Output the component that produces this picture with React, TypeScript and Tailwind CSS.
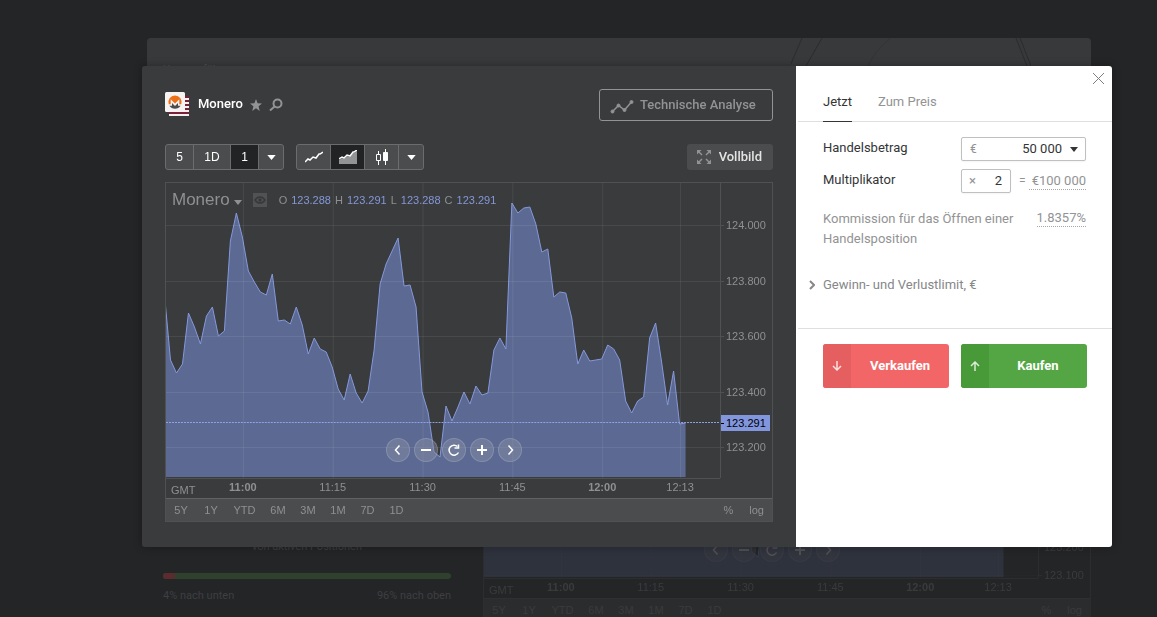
import { useState } from "react";
import type { ReactNode } from "react";

// one price sample per minute, in plot units
const SAMPLES = [
    112, 177, 190, 181, 130, 144, 161, 133, 124, 153, 148, 58, 30, 54, 88, 99, 109, 112, 91, 138,
    137, 141, 124, 142, 171, 155, 166, 169, 184, 206, 217, 191, 210, 220, 208, 167, 101, 81, 68, 55,
    103, 102, 124, 209, 229, 269, 274, 223, 238, 224, 209, 221, 203, 212, 210, 167, 155, 166, 20, 30,
    25, 24, 41, 69, 66, 114, 109, 110, 135, 181, 167, 178, 177, 176, 162, 166, 177, 218, 230, 218,
    214, 155, 140, 179, 222, 188, 241, 240,
];

const TIMES = [
    { label: "11:00", x: 77, strong: true },
    { label: "11:15", x: 167 },
    { label: "11:30", x: 257 },
    { label: "11:45", x: 347 },
    { label: "12:00", x: 437, strong: true },
    { label: "12:13", x: 515 },
];

const PRICES = [
    { label: "124.000", y: 42 },
    { label: "123.800", y: 98 },
    { label: "123.600", y: 153 },
    { label: "123.400", y: 209 },
    { label: "123.200", y: 264 },
];

const LOWER_PRICES = [
    { label: "123.400", y: 209 },
    { label: "123.200", y: 264 },
    { label: "123.100", y: 292 },
];

const OHLC = [
    ["O", "123.288"],
    ["H", "123.291"],
    ["L", "123.288"],
    ["C", "123.291"],
];

const RANGES = [
    { label: "5Y", width: "w-[30px]" },
    { label: "1Y", width: "w-[30px]" },
    { label: "YTD", width: "w-[37px]" },
    { label: "6M", width: "w-[30px]" },
    { label: "3M", width: "w-[30px]" },
    { label: "1M", width: "w-[30px]" },
    { label: "7D", width: "w-[29px]" },
    { label: "1D", width: "w-[29px]" },
];

const PLOT_W = 555;
const PLOT_H = 295;

const line = SAMPLES.map((y, i) => `${i * 6 - 1.5},${y}`).join(" ");
const area = `-1.5,294 ${line} 520.5,294`;

const Caret = ({ className = "" }: { className?: string }) => (
    <svg viewBox="0 0 10 6" className={className} fill="currentColor" aria-hidden="true">
        <path d="M0 0h10L5 6z" />
    </svg>
);

const MoneroLogo = () => (
    <svg viewBox="0 0 24 24" className="size-6" aria-hidden="true">
        <path fill="#f4eef0" d="M4 4h20v20H4z" />
        <path stroke="#7a2038" strokeWidth="2" d="M20 5h4M20 9h4M20 13h4M20 17h4M4 21h20" />
        <rect width="20" height="20" rx="1.5" fill="#f7f3f2" />
        <path fill="#ee6f16" d="M10 3.5a6.6 6.6 0 0 0-6.3 8.7h2V7.3l4.3 4.3 4.3-4.3v4.9h2A6.6 6.6 0 0 0 10 3.5z" />
        <path fill="#4c4c4c" d="M8.7 12.8 7 11v2.7H4.4a6.6 6.6 0 0 0 11.2 0H13V11l-1.7 1.8L10 14.1z" />
    </svg>
);

const RoundButton = ({ label, children }: { label: string; children: ReactNode }) => (
    <button
        type="button"
        aria-label={label}
        className="size-6 rounded-full border border-white/15 bg-[#8a8da3]/45 flex items-center justify-center text-white"
    >
        <svg viewBox="0 0 14 14" className="size-[14px]" fill="none" stroke="currentColor" strokeWidth="2" aria-hidden="true">
            {children}
        </svg>
    </button>
);

interface PriceChartProps {
    prices?: { label: string; y: number }[];
    lastPrice?: boolean;
}

const PriceChart = ({ prices = PRICES, lastPrice = true }: PriceChartProps) => {
    return <div className="border border-[#4f5152] font-['Liberation_Sans',Arial,sans-serif] text-[11px] leading-3 text-[#8f9091]">
        <div className="flex h-[295px]">
            <div className="relative flex-1 min-w-0">
                <svg viewBox={`0 0 ${PLOT_W} ${PLOT_H}`} preserveAspectRatio="none" className="w-full h-full" aria-hidden="true">
                    <polygon points={area} fill="#5c6a93" />
                    <polyline points={line} fill="none" stroke="#8498dc" strokeWidth="1" vectorEffect="non-scaling-stroke" />
                    <g stroke="#ffffff" strokeOpacity="0.08" shapeRendering="crispEdges">
                        {prices.map((p) => <line key={p.label} x1="0" x2={PLOT_W} y1={p.y + 0.5} y2={p.y + 0.5} />)}
                        {TIMES.map((t) => <line key={t.label} y1="0" y2={PLOT_H} x1={t.x + 0.5} x2={t.x + 0.5} />)}
                    </g>
                    {lastPrice && <line x1="0" x2={PLOT_W} y1="239.5" y2="239.5" stroke="#8fa2e6" strokeDasharray="2 1" shapeRendering="crispEdges" />}
                </svg>
                <div className="absolute left-[6px] top-[6px] flex items-center whitespace-nowrap">
                    <button type="button" className="flex items-center text-[17px] leading-[22px] text-[#8f9091]">
                        Monero
                        <Caret className="ml-1 mt-1 w-2 h-[5px]" />
                    </button>
                    <button type="button" aria-label="Anzeigen" className="ml-[11px] size-[14px] bg-[#505253] text-[#37393a] flex items-center justify-center">
                        <svg viewBox="0 0 12 8" className="w-3 h-2" fill="none" stroke="currentColor" strokeWidth="1.5" aria-hidden="true">
                            <path d="M1 4c2.500-4 7.500-4 10 0-2.500 4-7.500 4-10 0z" />
                            <circle cx="6" cy="4" r="1" fill="currentColor" />
                        </svg>
                    </button>
                    <dl className="ml-3 flex gap-1">
                        {OHLC.map(([key, value]) => (
                            <div key={key} className="flex gap-1">
                                <dt>{key}</dt>
                                <dd className="text-[#8497d8]">{value}</dd>
                            </div>
                        ))}
                    </dl>
                </div>
                <div className="absolute left-[52%] bottom-4 -translate-x-1/2 flex gap-1">
                    <RoundButton label="Zurück"><path d="M8.500 2.500 4.500 7l4 4.500" strokeWidth="1.5" /></RoundButton>
                    <RoundButton label="Verkleinern"><path d="M2 7h10" /></RoundButton>
                    <RoundButton label="Zurücksetzen">
                        <path d="M11.500 9.500A5 5 0 1 1 10.500 3.500" strokeWidth="1.5" />
                        <path d="M7.500 5h4V1.500" strokeWidth="1.5" />
                    </RoundButton>
                    <RoundButton label="Vergrößern"><path d="M2 7h10M7 2v10" /></RoundButton>
                    <RoundButton label="Vor"><path d="M5.500 2.500 9.500 7l-4 4.500" strokeWidth="1.5" /></RoundButton>
                </div>
            </div>
            <div className="relative w-[52px] border-l border-[#4f5152]">
                {prices.map((p) => (
                    <span key={p.label} className="absolute left-0 flex items-center gap-[2px] -translate-y-1/2" style={{ top: p.y }}>
                        <span className="w-[3px] h-px bg-[#4f5152]" />
                        {p.label}
                    </span>
                ))}
                {lastPrice && (
                    <span className="absolute left-0 top-[232px] flex h-4 w-[49px] items-center gap-[2px] bg-[#8296de] text-black">
                        <span className="w-[3px] h-px bg-black" />
                        123.291
                    </span>
                )}
            </div>
        </div>
        <div className="flex h-5">
            <div className="relative flex-1 border-t border-[#4f5152]">
                <button type="button" className="absolute left-[5px] top-[5px]">GMT</button>
                {TIMES.map((t) => (
                    <span
                        key={t.label}
                        className={`absolute top-[2px] -translate-x-1/2 ${t.strong ? "font-bold" : ""}`}
                        style={{ left: `${(t.x / PLOT_W) * 100}%` }}
                    >
                        {t.label}
                    </span>
                ))}
            </div>
            <div className="w-[52px] border-l border-transparent" />
        </div>
        <div className="flex h-[23px] items-center border-t border-[#606263] bg-[#4a4c4d]">
            {RANGES.map((r) => (
                <button key={r.label} type="button" className={r.width}>{r.label}</button>
            ))}
            <button type="button" className="ml-auto">%</button>
            <button type="button" className="ml-4 mr-2">log</button>
        </div>
    </div>;
}

// dimmed asset page that stays behind the dialog
const AssetPage = () => {
    return <div inert className="min-w-[900px] pl-[147px] pr-[66px] pt-[38px]">
        <header className="relative h-[244px] overflow-hidden rounded-t bg-[#38393b] px-4 pt-[22px] text-[11px] leading-5 text-[#505153]">
            Kursausführungen
            <svg viewBox="0 0 240 28" className="absolute right-[60px] top-0 w-[240px] h-7" fill="none" stroke="#2b2c2e" aria-hidden="true">
                <path d="m11 0-12 28M31 0 15 28M225 0l11 28M229 0l11 28" />
                <path d="M100 0Q84 12 77 28" strokeOpacity="0.4" />
            </svg>
        </header>
        <div className="flex">
            <section className="w-[336px] pl-4 pr-8 pt-[257px] text-[11px] leading-4 text-[#3e3f41]">
                <p className="text-center">von aktiven Positionen</p>
                <div className="mt-[18px] flex h-[6px] overflow-hidden rounded-full bg-[#2f402c]">
                    <div className="w-[4%] bg-[#592d2e]" />
                </div>
                <div className="mt-[9px] flex justify-between">
                    <span>4% nach unten</span>
                    <span>96% nach oben</span>
                </div>
            </section>
            <div className="min-w-0 flex-1 opacity-20">
                <PriceChart prices={LOWER_PRICES} lastPrice={false} />
            </div>
        </div>
    </div>;
}

const ChartPane = () => {
    const cell = "h-full flex items-center justify-center border-l border-[#6a6c6d] first:border-l-0";

    return <section className="min-w-0 flex-1 bg-[#3a3b3c] px-[23px] pt-[23px] pb-[25px]">
        <div className="flex h-8 items-center">
            <div className="mb-[2px]"><MoneroLogo /></div>
            <h1 className="ml-[9px] mr-2 mb-[2px] text-[13px] font-medium leading-4 text-white">Monero</h1>
            <button type="button" aria-label="Favorit" className="-ml-px mb-px text-[#929394]">
                <svg viewBox="0 0 12 12" className="size-3" fill="currentColor" aria-hidden="true">
                    <path d="m6 0 1.600 4.200 4.400.3-3.400 2.800L9.700 12 6 9.300 2.300 12l1.100-4.700L0 4.500l4.400-.3z" />
                </svg>
            </button>
            <button type="button" aria-label="Suchen" className="ml-[7px] mb-px text-[#929394]">
                <svg viewBox="0 0 14 14" className="size-[14px]" fill="none" stroke="currentColor" strokeWidth="2" aria-hidden="true">
                    <circle cx="8.500" cy="5.500" r="4" />
                    <path d="m5.500 8.500-4.500 4" />
                </svg>
            </button>
            <button type="button" className="ml-auto flex h-8 w-[174px] items-center rounded-[3px] border border-[#929394] pl-[10px] text-[13px] font-medium text-[#929394]">
                <svg viewBox="0 0 24 14" className="mt-1 w-6 h-[14px]" fill="currentColor" stroke="currentColor" aria-hidden="true">
                    <path d="m2.500 11.500 6-6 6 4.500 7-8" fill="none" strokeWidth="1.500" />
                    <circle cx="2.500" cy="11.500" r="1.500" />
                    <circle cx="8.500" cy="5.500" r="1.500" />
                    <circle cx="14.500" cy="10" r="1.500" />
                    <circle cx="21.500" cy="2" r="1.500" />
                </svg>
                <span className="ml-[6px]">Technische Analyse</span>
            </button>
        </div>

        <div className="mt-[23px] mb-3 flex h-[26px]">
            <div className="flex overflow-hidden rounded-[3px] border border-[#6a6c6d] bg-[#4a4c4d] font-['Liberation_Sans',Arial,sans-serif] text-xs text-white">
                <button type="button" className={`${cell} w-[27px]`}>5</button>
                <button type="button" className={`${cell} w-[37px]`}>1D</button>
                <button type="button" className={`${cell} w-[28px] bg-[#222325]`}>1</button>
                <button type="button" aria-label="Intervall" className={`${cell} w-[25px]`}><Caret className="w-[9px] h-[5px]" /></button>
            </div>
            <div className="ml-3 flex overflow-hidden rounded-[3px] border border-[#6a6c6d] bg-[#4a4c4d] text-white">
                <button type="button" aria-label="Linie" className={`${cell} w-[33px]`}>
                    <svg viewBox="0 0 18 14" className="w-[18px] h-[14px]" fill="none" stroke="currentColor" strokeWidth="1.500" aria-hidden="true">
                        <path d="m0 12 3-3 2 1 3-3 3 1 3-4h1l3-2" />
                    </svg>
                </button>
                <button type="button" aria-label="Fläche" className={`${cell} w-[34px] bg-[#222325]`}>
                    <svg viewBox="0 0 18 14" className="w-[18px] h-[14px]" fill="none" aria-hidden="true">
                        <path fill="#929394" d="m0 10 3-2 2 1 3-3 3 1 3-4h1l3-2v13H0z" />
                        <path stroke="currentColor" strokeWidth="1.500" d="m0 9 3-2 2 1 3-3 3 1 3-4h1l3-2" />
                    </svg>
                </button>
                <button type="button" aria-label="Kerzen" className={`${cell} w-[34px]`}>
                    <svg viewBox="0 0 12 16" className="w-3 h-4" fill="none" stroke="currentColor" aria-hidden="true">
                        <path d="M2.500 2v3M2.500 12v4M9.500 0v16" />
                        <path d="M.5 5.500h4v6h-4z" />
                        <path fill="currentColor" d="M7.500 3.500h4v8h-4z" />
                    </svg>
                </button>
                <button type="button" aria-label="Diagrammtyp" className={`${cell} w-[25px]`}><Caret className="w-[9px] h-[5px]" /></button>
            </div>
            <button type="button" className="ml-auto flex h-[26px] items-center gap-2 rounded-[3px] bg-[#4a4c4d] pl-[10px] pr-[11px] text-[13px] font-medium text-[#e4e4e4]">
                <svg viewBox="0 0 14 14" className="size-[14px] text-[#929394]" fill="currentColor" stroke="currentColor" aria-hidden="true">
                    <path fill="none" strokeWidth="1.500" d="m1 1 4 4M13 1 9 5M1 13l4-4M13 13 9 9" />
                    <path stroke="none" d="M0 0h4.500L0 4.500zM14 0v4.500L9.500 0zM0 14V9.500L4.500 14zM14 14H9.500L14 9.500z" />
                </svg>
                Vollbild
            </button>
        </div>

        <PriceChart />
    </section>;
}

const OrderPane = () => {
    const [amount, setAmount] = useState("50 000");
    const [multiplier, setMultiplier] = useState("2");
    const box = "flex h-6 items-center rounded-[2px] border border-[#bfc0c2] bg-white shadow-xs";

    return <section className="relative w-[316px] shrink-0 bg-white text-[13px] leading-5 text-[#333537]">
        <button type="button" aria-label="Schließen" className="absolute right-[7px] top-[6px] text-[#7d7f81]">
            <svg viewBox="0 0 13 13" className="size-[13px]" stroke="currentColor" aria-hidden="true">
                <path d="m1 1 11 11M12 1 1 12" />
            </svg>
        </button>
        <div role="tablist" className="ml-[2px] flex h-14 items-end gap-[26px] border-b border-[#dedfe0] pl-[25px]">
            <button type="button" role="tab" aria-selected="true" className="-mb-px border-b border-[#333537] pb-[9px]">Jetzt</button>
            <button type="button" role="tab" aria-selected="false" className="pb-[9px] text-[#929394]">Zum Preis</button>
        </div>

        <form className="pt-[15px]" onSubmit={(e) => e.preventDefault()}>
            <div className="flex flex-col gap-2 pl-[27px] pr-[26px]">
                <div className="flex h-6 justify-between">
                    <label htmlFor="amount" className="leading-[22px]">Handelsbetrag</label>
                    <div className={`${box} w-[125px] pl-2 pr-[7px]`}>
                        <span className="text-xs text-[#929394]">€</span>
                        <input id="amount" value={amount} onChange={(e) => setAmount(e.target.value)} className="min-w-0 flex-1 text-right outline-none" />
                        <button type="button" aria-label="Betrag wählen" className="ml-2"><Caret className="w-2 h-[5px]" /></button>
                    </div>
                </div>
                <div className="flex h-6">
                    <label htmlFor="multiplier" className="mr-auto leading-[22px]">Multiplikator</label>
                    <div className={`${box} w-[50px] pl-[7px] pr-2`}>
                        <span className="text-[#929394]">×</span>
                        <input id="multiplier" value={multiplier} onChange={(e) => setMultiplier(e.target.value)} className="min-w-0 flex-1 text-right outline-none" />
                    </div>
                    <div className="flex w-[75px] items-center justify-between pl-2 text-[#929394]">
                        <span className="text-xs">=</span>
                        <span className="border-b border-dotted border-[#a6a7a9] pl-[3px] leading-4">€100 000</span>
                    </div>
                </div>
            </div>

            <div className="mt-4 flex items-start justify-between gap-5 pl-[27px] pr-[26px] text-[#929394]">
                <p>Kommission für das Öffnen einer Handelsposition</p>
                <span className="mt-px border-b border-dotted border-[#a6a7a9] leading-4">1.8357%</span>
            </div>

            <button type="button" className="mt-[26px] flex items-center gap-2 pl-[13px] text-[#858789]">
                <svg viewBox="0 0 6 10" className="w-[6px] h-[10px]" fill="none" stroke="currentColor" strokeWidth="2" aria-hidden="true">
                    <path d="m1 1 4 4-4 4" />
                </svg>
                Gewinn- und Verlustlimit, €
            </button>

            <div className="ml-[2px] mt-[33px] flex gap-3 border-t border-[#dedfe0] pl-[25px] pr-[25px] pt-[15px] font-bold text-white">
                <button type="submit" className="flex h-11 flex-1 items-center overflow-hidden rounded-[3px] bg-[#f26667]">
                    <span className="flex h-full w-7 items-center justify-center bg-[#e65f60]">
                        <svg viewBox="0 0 10 10" className="size-[10px] opacity-80" fill="none" stroke="currentColor" strokeWidth="1.500" aria-hidden="true">
                            <path d="M5 0v9M1 5l4 4 4-4" />
                        </svg>
                    </span>
                    <span className="flex-1">Verkaufen</span>
                </button>
                <button type="submit" className="flex h-11 flex-1 items-center overflow-hidden rounded-[3px] bg-[#54a644]">
                    <span className="flex h-full w-7 items-center justify-center bg-[#489938]">
                        <svg viewBox="0 0 10 10" className="size-[10px] opacity-80" fill="none" stroke="currentColor" strokeWidth="1.500" aria-hidden="true">
                            <path d="M5 10V1M1 5l4-4 4 4" />
                        </svg>
                    </span>
                    <span className="flex-1">Kaufen</span>
                </button>
            </div>
        </form>
    </section>;
}

const App = () => {
    return <div className="relative h-screen overflow-hidden bg-[#242527] font-[Roboto,sans-serif]">
        <AssetPage />
        <div className="absolute inset-0 min-w-[900px] pl-[142px] pr-[45px] pt-[66px]">
            <div role="dialog" aria-label="Monero" className="flex overflow-hidden rounded-[3px] shadow-[0_0_8px_rgba(0,0,0,0.3)]">
                <ChartPane />
                <OrderPane />
            </div>
        </div>
    </div>;
}

export default App;
